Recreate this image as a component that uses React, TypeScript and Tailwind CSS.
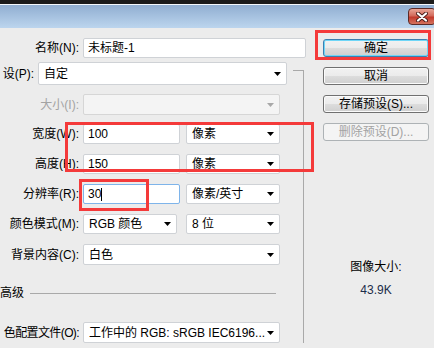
import React from 'react';

function Caret({ disabled }: { disabled?: boolean }) {
  return (
    <svg width="7" height="4" viewBox="0 0 7 4" className="shrink-0">
      <path d="M0 0h7L3.5 4z" fill={disabled ? '#a8a8a8' : '#000'} />
    </svg>
  );
}

function Select({ value, width, disabled }: { value?: string; width: string; disabled?: boolean }) {
  return (
    <div
      className={`flex items-center h-full shrink-0 rounded-[2px] border pl-[5px] pr-[5px] ${width} ${
        disabled ? 'bg-[#f4f4f4] border-[#d6d6d6]' : 'bg-white border-[#cfd2d6]'
      }`}
    >
      <span className="flex-1 truncate whitespace-nowrap">{value}</span>
      <Caret disabled={disabled} />
    </div>
  );
}

function TextBox({ value, width, focused }: { value: string; width: string; focused?: boolean }) {
  return (
    <div
      className={`flex items-center h-full shrink-0 rounded-[2px] border bg-white pl-[4px] ${width} ${
        focused ? 'border-[#7eb4ea]' : 'border-[#cfd2d6]'
      }`}
    >
      <span>{value}</span>
      {focused && <span className="w-px h-[13px] bg-black" />}
    </div>
  );
}

function Label({ text, disabled, tight }: { text: string; disabled?: boolean; tight?: boolean }) {
  return (
    <div
      className={`w-[79px] mr-[4px] shrink-0 flex justify-end whitespace-nowrap ${tight ? 'tracking-[-0.6px]' : ''} ${
        disabled ? 'text-[#a3a3a3]' : 'text-black'
      }`}
    >
      {text}
    </div>
  );
}

function Button({ text, primary, disabled }: { text: string; primary?: boolean; disabled?: boolean }) {
  let look =
    'border-[#707070] bg-[linear-gradient(#f2f2f2_0%,#ebebeb_50%,#dddddd_50%,#cfcfcf_100%)] shadow-[inset_0_0_0_1px_#fbfbfb] text-black';
  if (primary)
    look =
      'border-[#3c7fb1] bg-[linear-gradient(#f2f2f2_0%,#ebebeb_50%,#dddddd_50%,#cfcfcf_100%)] shadow-[inset_0_0_0_1px_#6fd6f7] text-black';
  if (disabled) look = 'border-[#adb2b5] bg-[#f4f4f4] text-[#a3a3a3]';
  return (
    <div className={`h-[18px] w-[106px] rounded-[3px] border flex items-center justify-center leading-none ${look}`}>
      {text}
    </div>
  );
}

export default function App() {
  return (
    <div className="relative w-[434px] h-[348px] overflow-hidden bg-[#ececec] text-[12px] leading-[14px] font-['Liberation_Sans','Noto_Sans_CJK_SC',sans-serif]">
      {/* window chrome */}
      <div className="h-[4px] bg-[#1b1b1b]" />
      <div className="h-[24px] border-t border-[#f4f8fc] bg-[linear-gradient(#90aed1,#bcd5ee)] flex justify-end pt-[3px]">
        <div className="w-[28px] h-[17px] -mr-[2px] rounded-[4px] border border-[#5c2a26] bg-[linear-gradient(#e9a596,#d26a5b_45%,#c23a2c_55%,#d5735e)] flex items-center justify-center">
          <svg width="12" height="10" viewBox="0 0 12 10">
            <path d="M2 1.5l8 7M10 1.5l-8 7" stroke="#4a1c18" strokeWidth="4" strokeLinecap="round" />
            <path d="M2 1.5l8 7M10 1.5l-8 7" stroke="#fff" strokeWidth="2.2" strokeLinecap="round" />
          </svg>
        </div>
      </div>

      <div className="flex">
        {/* left form */}
        <div className="w-[304px] shrink-0 pt-[10px]">
          <div className="flex items-center h-[20px]">
            <Label text="名称(N):" />
            <TextBox value="未标题-1" width="w-[223px]" />
          </div>

          <div className="mt-[12px] w-[304px] border-t border-r border-[#a9a9a9]">
            <div className="relative -mt-[9px] flex items-center h-[23px] w-[293px] bg-[#ececec]">
              <div className="w-[34px] mr-[4px] shrink-0 flex justify-end whitespace-nowrap">设(P):</div>
              <Select value="自定" width="w-[249px]" />
            </div>

            <div className="mt-[9px] flex items-center h-[21px]">
              <Label text="大小(I):" disabled />
              <Select width="w-[197px]" disabled />
            </div>

            <div className="mt-[9px] flex items-center h-[20px]">
              <Label text="宽度(W):" />
              <TextBox value="100" width="w-[97px]" />
              <div className="ml-[6px] h-full">
                <Select value="像素" width="w-[94px]" />
              </div>
            </div>

            <div className="mt-[10px] flex items-center h-[20px]">
              <Label text="高度(H):" />
              <TextBox value="150" width="w-[97px]" />
              <div className="ml-[6px] h-full">
                <Select value="像素" width="w-[94px]" />
              </div>
            </div>

            <div className="mt-[10px] flex items-center h-[20px]">
              <Label text="分辨率(R):" />
              <TextBox value="30" width="w-[97px]" focused />
              <div className="ml-[6px] h-full">
                <Select value="像素/英寸" width="w-[94px]" />
              </div>
            </div>

            <div className="mt-[10px] flex items-center h-[20px]">
              <Label text="颜色模式(M):" />
              <Select value="RGB 颜色" width="w-[94px]" />
              <div className="ml-[9px] h-full">
                <Select value="8 位" width="w-[94px]" />
              </div>
            </div>

            <div className="mt-[10px] flex items-center h-[21px]">
              <Label text="背景内容(C):" />
              <Select value="白色" width="w-[197px]" />
            </div>

            <div className="mt-[21px] flex items-center h-[14px]">
              <span className="whitespace-nowrap">高级</span>
              <div className="ml-[6px] w-[246px] h-px bg-[#a9a9a9]" />
            </div>

            <div className="mt-[22px] flex items-center h-[21px]">
              <Label text="色配置文件(O):" tight />
              <Select value="工作中的 RGB: sRGB IEC6196..." width="w-[197px]" />
            </div>
          </div>
        </div>

        {/* right buttons */}
        <div className="flex flex-col pl-[19px] pt-[11px] gap-[10px]">
          <Button text="确定" primary />
          <Button text="取消" />
          <Button text="存储预设(S)..." />
          <Button text="删除预设(D)..." disabled />
          <div className="mt-[109px] w-[106px] text-center text-black">图像大小:</div>
          <div className="-mt-[1px] w-[106px] text-center text-[#1c2d4a]">43.9K</div>
        </div>
      </div>

      {/* red annotation boxes */}
      <div className="absolute left-[65px] top-[122px] w-[249px] h-[50px] border-[3px] border-[#f43a3a]" />
      <div className="absolute left-[79px] top-[179px] w-[70px] h-[32px] border-[3px] border-[#f43a3a]" />
      <div className="absolute left-[315px] top-[30px] w-[116px] h-[30px] border-[3px] border-[#f43a3a]" />
    </div>
  );
}
